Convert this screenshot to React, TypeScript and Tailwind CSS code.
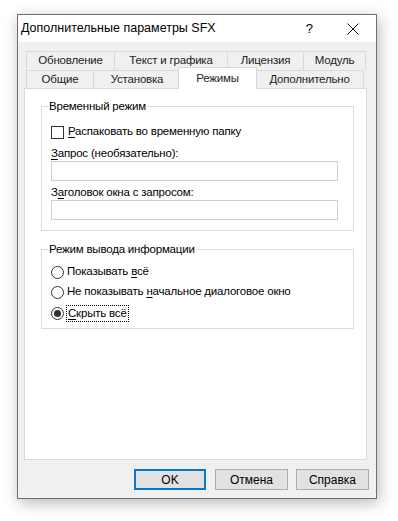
import React from "react";

const font = { fontFamily: '"Liberation Sans", Arial, sans-serif' };

function Tab({ label, w, last }: { label: string; w: number; last?: boolean }) {
  return (
    <div
      className={`flex h-full items-center justify-center border-t border-l border-[#d9d9d9] ${last ? "border-r" : ""}`}
      style={{ width: w }}
    >
      {label}
    </div>
  );
}

function U({ children }: { children: React.ReactNode }) {
  return <span className="underline underline-offset-2">{children}</span>;
}

function Radio({ checked }: { checked?: boolean }) {
  return (
    <span className="flex h-[13px] w-[13px] shrink-0 items-center justify-center rounded-full border border-[#333333] bg-white">
      {checked && <span className="h-[7px] w-[7px] rounded-full bg-[#333333]" />}
    </span>
  );
}

export default function App() {
  return (
    <div className="h-[521px] w-[398px] bg-white pl-[17px] pt-[14px] text-black" style={font}>
      <div className="flex h-[485px] w-[360px] flex-col border border-[#6e6e6e] shadow-[2px_4px_14px_rgba(0,0,0,0.28)]">
        {/* title bar */}
        <div className="flex h-[27px] items-center bg-white pl-[3px]">
          <span className="text-[12.5px]">Дополнительные параметры SFX</span>
          <span className="ml-auto mr-[34px] text-[13px]">?</span>
          <svg width="12" height="12" viewBox="0 0 12 12" className="mr-[17px]">
            <path d="M0.5 0.5 L11.5 11.5 M11.5 0.5 L0.5 11.5" stroke="#111" strokeWidth="1" />
          </svg>
        </div>

        {/* body */}
        <div className="flex flex-1 flex-col bg-[#f0f0f0] pl-[6px] pt-[9px] text-[11.5px] tracking-[-0.2px]">
          {/* tabs */}
          <div className="flex h-[19px] pl-[2px] text-[#222]">
            <Tab label="Обновление" w={88} />
            <Tab label="Текст и графика" w={113} />
            <Tab label="Лицензия" w={76} />
            <Tab label="Модуль" w={63} last />
          </div>
          <div className="flex h-[18px] pl-[2px] text-[#222]">
            <Tab label="Общие" w={67} />
            <Tab label="Установка" w={87} />
            <div className="relative z-10 -mx-[2px] -mt-[3px] flex h-[22px] w-[79px] items-start justify-center border-x border-t border-[#d9d9d9] bg-white pt-[2px]">
              Режимы
            </div>
            <Tab label="Дополнительно" w={109} last />
          </div>

          {/* panel */}
          <div className="flex h-[372px] w-[343px] flex-col border border-[#d9d9d9] bg-white pl-[16px] pt-[9px]">
            <fieldset className="w-[313px] border border-[#dcdcdc] pb-[10px] pl-[9px]">
              <legend className="-ml-[3px] px-[1px] leading-[16px]">Временный режим</legend>
              <div className="mt-[10px] flex h-[16px] items-center gap-[4px]">
                <span className="h-[13px] w-[13px] border border-[#333333] bg-white" />
                <span>
                  <U>Р</U>аспаковать во временную папку
                </span>
              </div>
              <div className="mt-[5px] h-[16px] leading-[16px]">
                <U>З</U>апрос (необязательно):
              </div>
              <div className="h-[20px] w-[287px] border border-[#cfcfcf] bg-white" />
              <div className="mt-[3px] h-[16px] leading-[16px]">
                З<U>а</U>головок окна с запросом:
              </div>
              <div className="h-[20px] w-[287px] border border-[#cfcfcf] bg-white" />
            </fieldset>

            <fieldset className="mt-[10px] w-[313px] border border-[#dcdcdc] pb-[7px] pl-[9px]">
              <legend className="-ml-[3px] px-[1px] leading-[16px]">Режим вывода информации</legend>
              <div className="mt-[7px] flex h-[16px] items-center gap-[3px]">
                <Radio />
                <span>
                  Показывать <U>в</U>сё
                </span>
              </div>
              <div className="mt-[4px] flex h-[16px] items-center gap-[3px]">
                <Radio />
                <span>
                  Не показывать <U>н</U>ачальное диалоговое окно
                </span>
              </div>
              <div className="mt-[5px] flex h-[16px] items-center gap-[2px]">
                <Radio checked />
                <span className="border border-dotted border-black px-[1px] leading-[15px]">
                  <U>С</U>крыть всё
                </span>
              </div>
            </fieldset>
          </div>

          {/* buttons */}
          <div className="mt-[9px] flex gap-[9px] pl-[110px] text-[12px] tracking-normal">
            <button className="h-[21px] w-[72px] border-2 border-[#0078d7] bg-[#e1e1e1]">OK</button>
            <button className="h-[21px] w-[73px] border border-[#adadad] bg-[#e1e1e1]">Отмена</button>
            <button className="-ml-[1px] h-[21px] w-[73px] border border-[#adadad] bg-[#e1e1e1]">Справка</button>
          </div>
        </div>
      </div>
    </div>
  );
}
